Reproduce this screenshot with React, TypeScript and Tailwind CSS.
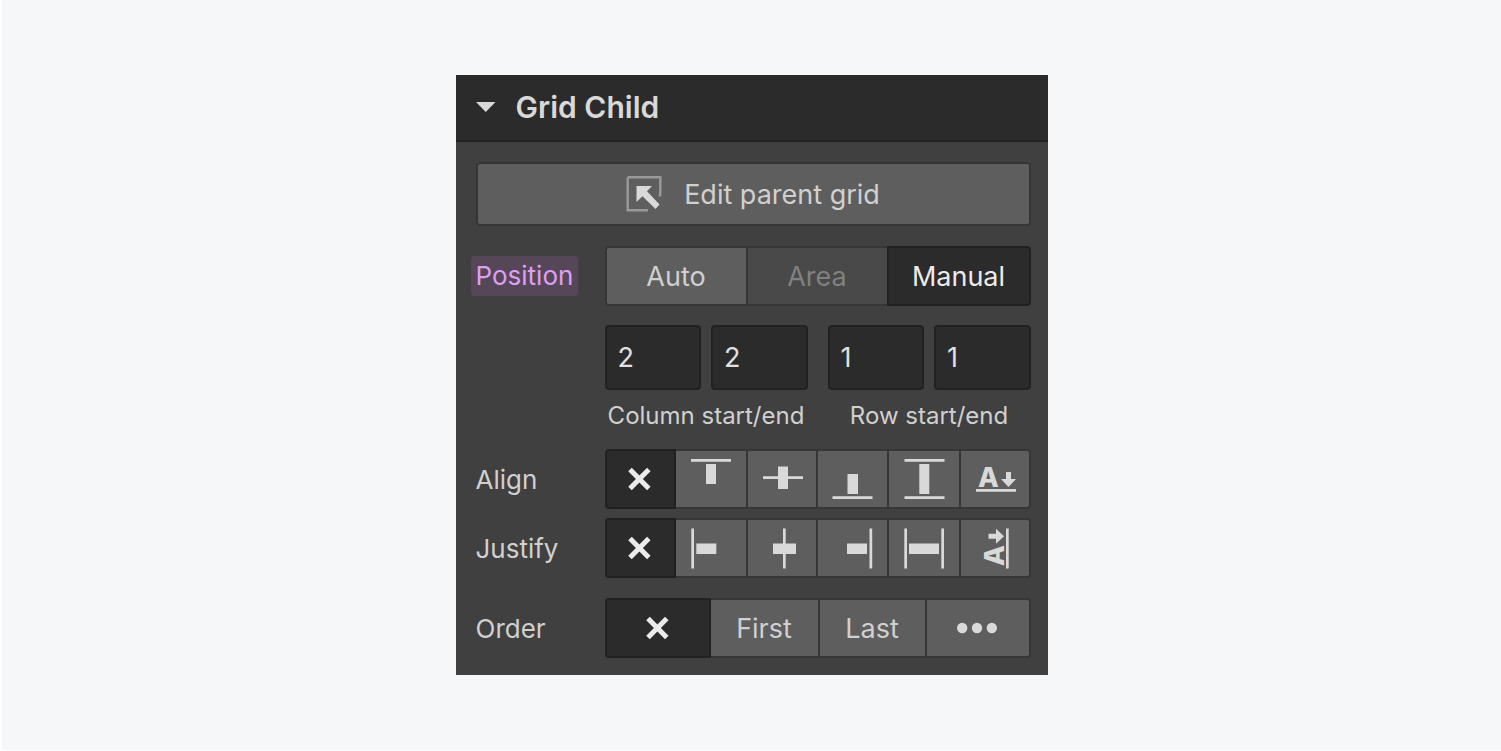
import React, { useState } from "react";
import clsx from "clsx";

interface Option {
  id: string;
  label: string;
  content: React.ReactNode;
  disabled?: boolean;
}

const Cross = () => (
  <svg width="24" height="24" viewBox="0 0 24 24" fill="none" aria-hidden="true">
    <path d="M2 2.600 20.800 21.400M20.800 2.600 2 21.400" stroke="#ebebeb" strokeWidth="5" />
  </svg>
);

const Glyph = ({ children }: { children: React.ReactNode }) => (
  <svg
    width="40"
    height="40"
    viewBox="0 0 40 40"
    fill="#d9d9d9"
    className="overflow-visible shrink-0"
    aria-hidden="true"
  >
    {children}
  </svg>
);

const Dots = () => (
  <svg width="42" height="12" viewBox="0 0 42 12" fill="#d9d9d9" aria-hidden="true">
    <circle cx="5.200" cy="6" r="5.200" />
    <circle cx="20" cy="6" r="5.200" />
    <circle cx="34.800" cy="6" r="5.200" />
  </svg>
);

const positions: Option[] = [
  { id: "auto", label: "Auto", content: "Auto" },
  { id: "area", label: "Area", content: "Area", disabled: true },
  { id: "manual", label: "Manual", content: "Manual" },
];

const aligns: Option[] = [
  { id: "none", label: "Align none", content: <Cross /> },
  {
    id: "start",
    label: "Align start",
    content: (
      <Glyph>
        <path d="M0 0h40v2.7H0zM15 5h10v20H15z" />
      </Glyph>
    ),
  },
  {
    id: "center",
    label: "Align center",
    content: (
      <Glyph>
        <path d="M1 17.2h40v2.7H1zM16 7.5h10V30H16z" />
      </Glyph>
    ),
  },
  {
    id: "end",
    label: "Align end",
    content: (
      <Glyph>
        <path d="M.5 37.200h40v2.700H.5zM15.500 15H26v20H15.500z" />
      </Glyph>
    ),
  },
  {
    id: "stretch",
    label: "Align stretch",
    content: (
      <Glyph>
        <path d="M.5 0h40v2.700H.5zM.5 37.200h40v2.700H.5zM15.300 5h10v30h-10z" />
      </Glyph>
    ),
  },
  {
    id: "baseline",
    label: "Align baseline",
    content: (
      <Glyph>
        <text x="3" y="28" fontSize="27" fontWeight="800">
          A
        </text>
        <path d="M1 30h40v2.700H1zM31 13h5v7h5l-7.500 8L26 20h5z" />
      </Glyph>
    ),
  },
];

const justifies: Option[] = [
  { id: "none", label: "Justify none", content: <Cross /> },
  {
    id: "start",
    label: "Justify start",
    content: (
      <Glyph>
        <path d="M.3 .4H3v40H.3zM5.300 15.500h20v10.400h-20z" />
      </Glyph>
    ),
  },
  {
    id: "center",
    label: "Justify center",
    content: (
      <Glyph>
        <path d="M21 .4h2.700v40H21zM11 15.500h23v10.400H11z" />
      </Glyph>
    ),
  },
  {
    id: "end",
    label: "Justify end",
    content: (
      <Glyph>
        <path d="M37.500 .4h2.700v40h-2.700zM15 15.500h20v10.400H15z" />
      </Glyph>
    ),
  },
  {
    id: "stretch",
    label: "Justify stretch",
    content: (
      <Glyph>
        <path d="M.3 .4H3v40H.3zM37.300 .4H40v40h-2.700zM5 15.500h30v10.400H5z" />
      </Glyph>
    ),
  },
  {
    id: "baseline",
    label: "Justify baseline",
    content: (
      <Glyph>
        <text transform="translate(29 38) rotate(-90)" fontSize="27" fontWeight="800">
          A
        </text>
        <path d="M31 .4h2.700v40H31zM13.500 5.700v5H21v5l8-7.500-8-7.500v5z" />
      </Glyph>
    ),
  },
];

const orders: Option[] = [
  { id: "none", label: "Order none", content: <Cross /> },
  { id: "first", label: "First", content: "First" },
  { id: "last", label: "Last", content: "Last" },
  { id: "more", label: "More", content: <Dots /> },
];

const Segmented = ({
  name,
  options,
  initial,
  columns,
}: {
  name: string;
  options: Option[];
  initial: string;
  columns: string;
}) => {
  const [value, setValue] = useState(initial);
  return (
    <div role="group" aria-labelledby={name} className={clsx("grid flex-1", columns)}>
      {options.map((o) => (
        <button
          key={o.id}
          type="button"
          aria-label={o.label}
          aria-pressed={o.id === value}
          disabled={o.disabled}
          onClick={() => setValue(o.id)}
          className={clsx(
            "-mr-0.5 last:mr-0 h-[60px] flex items-center justify-center border-2 first:rounded-l last:rounded-r",
            o.id === value
              ? "relative bg-[#2b2b2b] border-[#212121] text-[#ebebeb]"
              : o.disabled
                ? "bg-[#494949] border-[#363636] text-[#808080]"
                : "bg-[#5e5e5e] border-[#363636] text-[#d0d0d0]"
          )}
        >
          {o.content}
        </button>
      ))}
    </div>
  );
};

const RangeFields = ({ id, title, value }: { id: string; title: string; value: string }) => (
  <div className="flex-1 min-w-0">
    <div className="flex gap-2.5">
      {["start", "end"].map((edge) => (
        <input
          key={edge}
          id={id + "-" + edge}
          aria-label={id + " " + edge}
          defaultValue={value}
          className="flex-1 min-w-0 h-[65px] px-[11px] rounded border-2 bg-[#2b2b2b] border-[#212121] text-[#e0e0e0]"
        />
      ))}
    </div>
    <label
      htmlFor={id + "-start"}
      className="block mt-2.5 text-center text-[24px] leading-8 whitespace-nowrap"
    >
      {title}
    </label>
  </div>
);

const Row = ({ id, title, children }: { id: string; title: string; children: React.ReactNode }) => (
  <div className="flex items-center">
    <div id={id} className="w-[129px] shrink-0 text-[26px]">
      {title}
    </div>
    {children}
  </div>
);

const App = () => {
  return (
    <main className="min-h-screen flex items-center justify-center bg-[#f5f7f9] border-l-2 border-b border-white font-['Inter',sans-serif]">
      <section className="w-full max-w-[592px] bg-[#404040] text-[#d0d0d0] text-[27px] leading-[37px]">
        <h2 className="bg-[#2b2b2b] border-b-2 border-[#212121]">
          <button
            type="button"
            aria-expanded="true"
            className="w-full h-[65px] px-5 flex items-center gap-5 text-[30px] leading-[35px] font-semibold text-[#d9d9d9]"
          >
            <svg width="20" height="12" viewBox="0 0 20 12" fill="#d9d9d9" aria-hidden="true">
              <path d="M0 0h19.500L9.750 10z" />
            </svg>
            Grid Child
          </button>
        </h2>
        <div className="pt-5 pb-[17px] pl-5 pr-[17px]">
          <button
            type="button"
            className="w-full h-16 flex items-center justify-center gap-[22px] rounded border-2 bg-[#5e5e5e] border-[#363636]"
          >
            <svg width="36" height="36" viewBox="0 0 36 36" fill="none" aria-hidden="true">
              <path d="M1.700 1.300h32.600v17.500l-1.500 1.200M22 34.300H1.700V1.300" stroke="#999999" strokeWidth="2.400" />
              <path
                d="M10.500 10H26l-5 5.300L33.500 28.500 29.500 33 16.500 20.300l-6 5.700z"
                fill="#d9d9d9"
              />
            </svg>
            Edit parent grid
          </button>
          <div className="mt-5 flex items-center">
            <div className="w-[129px] shrink-0 text-[26px]">
              <span
                id="position"
                className="inline-block -ml-[5px] px-[5px] rounded leading-10 bg-[#554758] text-[#dd9ff5]"
              >
                Position
              </span>
            </div>
            <Segmented
              name="position"
              options={positions}
              initial="manual"
              columns="grid-cols-[141fr_141fr_144fr]"
            />
          </div>
          <div className="mt-[19px] ml-[129px] flex gap-5">
            <RangeFields id="column" title="Column start/end" value="2" />
            <RangeFields id="row" title="Row start/end" value="1" />
          </div>
          <div className="mt-[17px] flex flex-col gap-[9px]">
            <Row id="align" title="Align">
              <Segmented
                name="align"
                options={aligns}
                initial="none"
                columns="grid-cols-[69fr_72fr_70fr_71fr_72fr_72fr]"
              />
            </Row>
            <Row id="justify" title="Justify">
              <Segmented
                name="justify"
                options={justifies}
                initial="none"
                columns="grid-cols-[69fr_72fr_70fr_71fr_72fr_72fr]"
              />
            </Row>
          </div>
          <div className="mt-5">
            <Row id="order" title="Order">
              <Segmented
                name="order"
                options={orders}
                initial="none"
                columns="grid-cols-[104fr_109fr_107fr_106fr]"
              />
            </Row>
          </div>
        </div>
      </section>
    </main>
  );
};

export default App;
